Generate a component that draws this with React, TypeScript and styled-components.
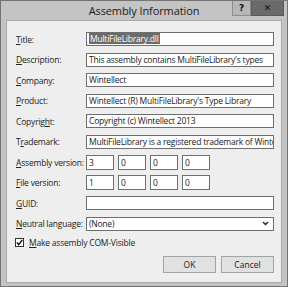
import React from "react";
import styled, { createGlobalStyle } from "styled-components";

const Global = createGlobalStyle`
  html, body { margin: 0; padding: 0; background: #9c9c9c; }
  body { font-family: "Open Sans", "Noto Sans", sans-serif; }
  * { box-sizing: border-box; }
`;

const Window = styled.div`
  width: 288px;
  height: 287px;
  display: flex;
  flex-direction: column;
  background: #c4c4c4;
  border: 1px solid #737373;
`;

const TitleBar = styled.div`
  height: 19px;
  display: grid;
  grid-template-columns: 1fr auto 1fr;
  align-items: start;
`;

const TitleText = styled.div`
  grid-column: 2;
  font-size: 11px;
  line-height: 19px;
  color: #1a1a1a;
  letter-spacing: -0.1px;
`;

const Caption = styled.div`
  grid-column: 3;
  justify-self: end;
  display: flex;
  margin-right: 3px;
`;

const CapButton = styled.div<{ $dark?: boolean }>`
  width: ${(p) => (p.$dark ? 33 : 19)}px;
  height: 15px;
  display: flex;
  align-items: center;
  justify-content: center;
  background: ${(p) => (p.$dark ? "#6a6a6a" : "#b7b7b7")};
  border: 1px solid ${(p) => (p.$dark ? "#5a5a5a" : "#8e8e8e")};
  border-top: none;
  font-family: "DejaVu Sans", sans-serif;
  font-weight: bold;
  font-size: 9px;
  color: #111;
`;

const Client = styled.div`
  flex: 1;
  margin: 0 5px 3px 5px;
  background: #eeeeee;
  border: 1px solid #a9a9a9;
  padding: 11px 7px 0 9px;
  display: flex;
  flex-direction: column;
`;

const Form = styled.div`
  display: grid;
  grid-template-columns: 70px 188px;
  grid-auto-rows: 14px;
  row-gap: 6.5px;
  align-items: center;
`;

const Label = styled.label`
  font-size: 8.5px;
  color: #222;
  white-space: nowrap;
  letter-spacing: -0.2px;
  u { text-decoration: underline; text-underline-offset: 1px; }
`;

const TextBox = styled.div`
  height: 14px;
  background: #fff;
  border: 1px solid #6e6e6e;
  font-size: 8.5px;
  line-height: 12px;
  padding-left: 2px;
  color: #222;
  white-space: nowrap;
  overflow: hidden;
  letter-spacing: -0.22px;
`;

const Selection = styled.span`
  background: #6b6b6b;
  color: #fff;
  padding: 0 1px;
`;

const Versions = styled.div`
  display: flex;
  gap: 4px;
  height: 15px;
`;

const VersionBox = styled(TextBox)`
  width: 28px;
  height: 15px;
  line-height: 13px;
`;

const Select = styled(TextBox)`
  display: flex;
  justify-content: space-between;
  align-items: center;
  padding-right: 4px;
`;

const CheckRow = styled.div`
  display: flex;
  align-items: center;
  gap: 5px;
  height: 12px;
  margin: 6px 0 0 -1px;
  font-size: 8.5px;
  color: #222;
  letter-spacing: -0.2px;
`;

const Box = styled.div`
  width: 9px;
  height: 9px;
  border: 1px solid #333;
  background: #fff;
  display: flex;
  align-items: center;
  justify-content: center;
`;

const Buttons = styled.div`
  display: flex;
  justify-content: flex-end;
  gap: 5px;
  margin-top: 7.5px;
`;

const Button = styled.div`
  width: 53px;
  height: 17px;
  background: #e1e1e1;
  border: 1px solid #a3a3a3;
  font-size: 8.5px;
  display: flex;
  align-items: center;
  justify-content: center;
  color: #222;
`;

const L = ({ text, k }: { text: string; k: number }) => (
  <Label>
    {text.slice(0, k)}
    <u>{text[k]}</u>
    {text.slice(k + 1)}
  </Label>
);

export default function App() {
  return (
    <>
      <Global />
      <Window>
        <TitleBar>
          <TitleText>Assembly Information</TitleText>
          <Caption>
            <CapButton>?</CapButton>
            <CapButton $dark>✕</CapButton>
          </Caption>
        </TitleBar>
        <Client>
          <Form>
            <L text="Title:" k={0} />
            <TextBox>
              <Selection>MultiFileLibrary.dll</Selection>
            </TextBox>
            <L text="Description:" k={0} />
            <TextBox>This assembly contains MultiFileLibrary's types</TextBox>
            <L text="Company:" k={0} />
            <TextBox>Wintellect</TextBox>
            <L text="Product:" k={0} />
            <TextBox>Wintellect (R) MultiFileLibrary's Type Library</TextBox>
            <L text="Copyright:" k={7} />
            <TextBox>Copyright (c) Wintellect 2013</TextBox>
            <L text="Trademark:" k={1} />
            <TextBox>MultiFileLibrary is a registered trademark of Wintellect</TextBox>
            <L text="Assembly version:" k={0} />
            <Versions>
              {["3", "0", "0", "0"].map((v, i) => (
                <VersionBox key={i}>{v}</VersionBox>
              ))}
            </Versions>
            <L text="File version:" k={0} />
            <Versions>
              {["1", "0", "0", "0"].map((v, i) => (
                <VersionBox key={i}>{v}</VersionBox>
              ))}
            </Versions>
            <L text="GUID:" k={0} />
            <TextBox />
            <L text="Neutral language:" k={0} />
            <Select>
              <span>(None)</span>
              <svg width="7" height="5" viewBox="0 0 7 5">
                <path d="M1 1 L3.5 3.5 L6 1" stroke="#222" strokeWidth="1.4" fill="none" />
              </svg>
            </Select>
          </Form>
          <CheckRow>
            <Box>
              <svg width="7" height="7" viewBox="0 0 7 7">
                <path d="M0.8 3.6 L2.7 5.6 L6.3 1" stroke="#111" strokeWidth="1.4" fill="none" />
              </svg>
            </Box>
            <span>
              <u>M</u>ake assembly COM-Visible
            </span>
          </CheckRow>
          <Buttons>
            <Button>OK</Button>
            <Button>Cancel</Button>
          </Buttons>
        </Client>
      </Window>
    </>
  );
}
